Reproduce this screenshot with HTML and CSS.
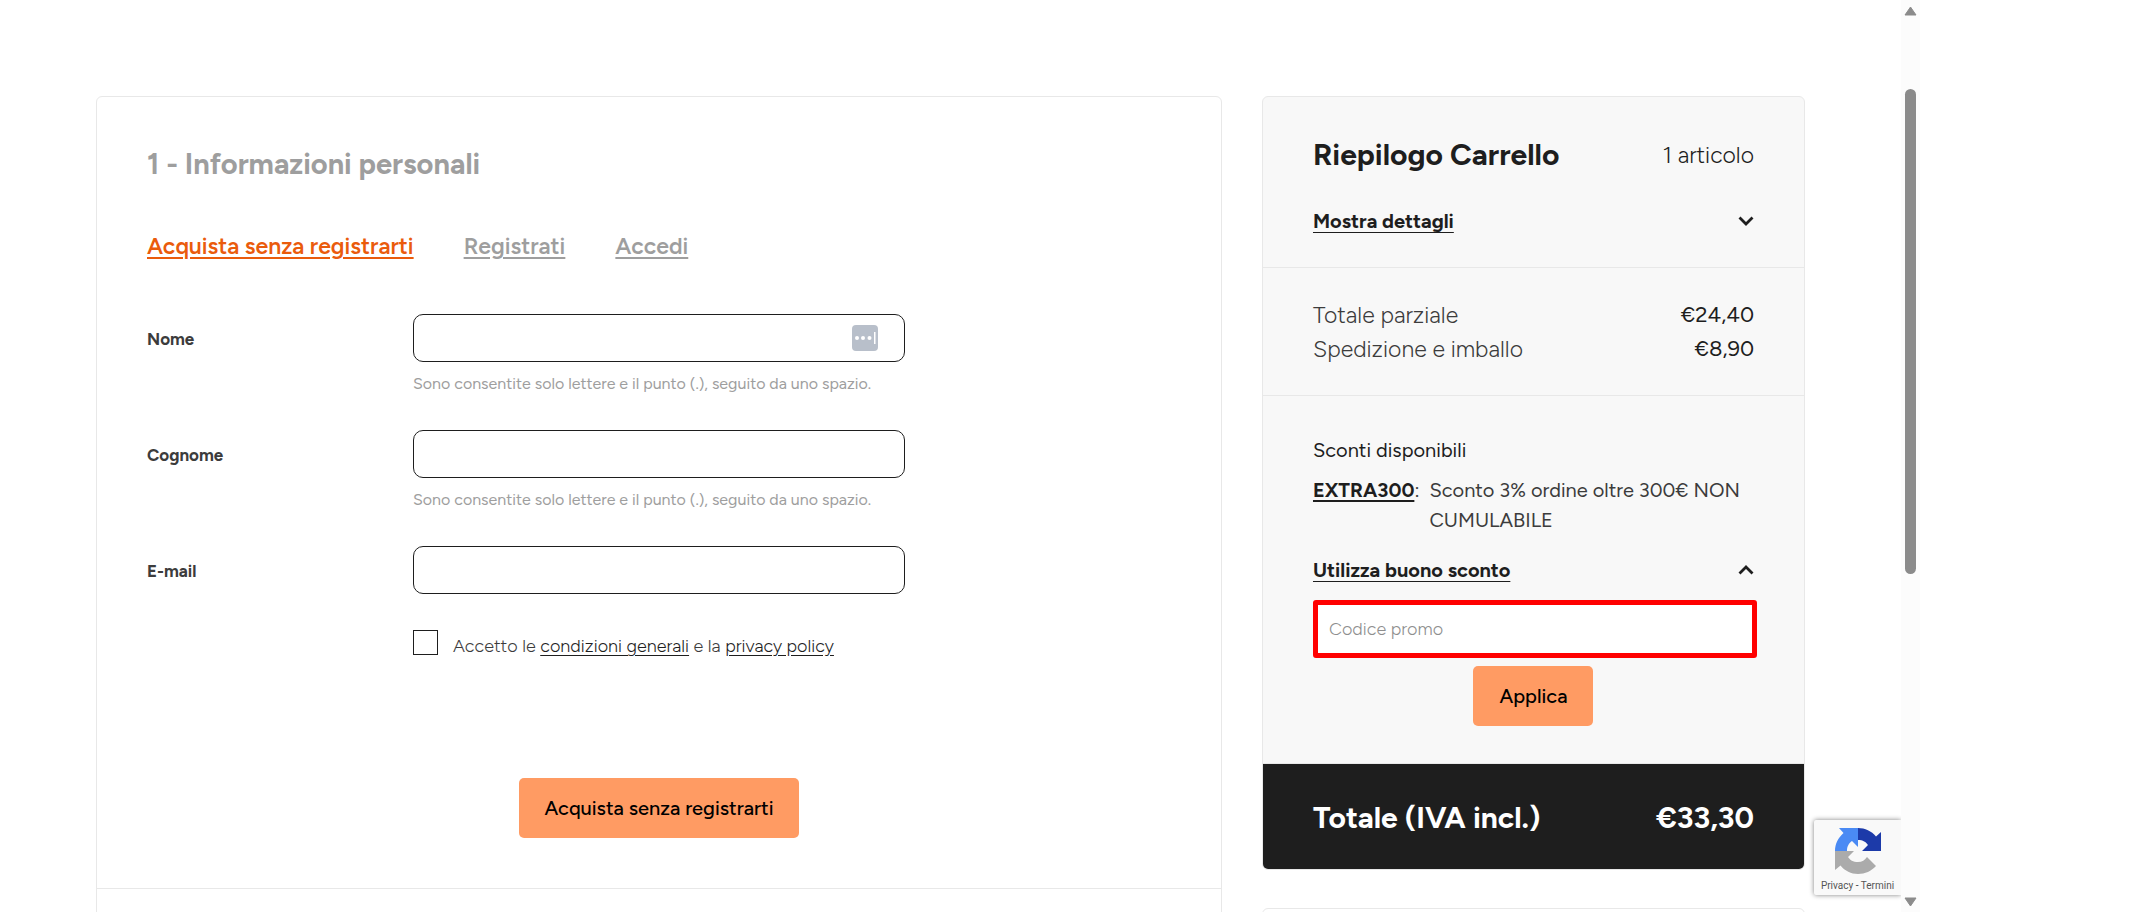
FILE: index.html
```html
<!DOCTYPE html>
<html lang="it">
<head>
    <meta charset="UTF-8">
    <title>Checkout</title>
    <link rel="stylesheet" href="styles.css">
</head>
<body>

    <div class="viewport">
        <main class="checkout">

            <!-- Personal information -->
            <section class="card">
                <div class="step">
                    <h1 class="step-title">1 - Informazioni personali</h1>
                    <nav class="tabs">
                        <a class="active" href="#guest">Acquista senza registrarti</a>
                        <a href="#register">Registrati</a>
                        <a href="#login">Accedi</a>
                    </nav>

                    <form id="guest">
                        <div class="form-row">
                            <label for="firstname">Nome</label>
                            <div class="field">
                                <div class="input-wrap">
                                    <input class="text-input" type="text" id="firstname">
                                    <svg class="autofill" width="26" height="26" viewBox="0 0 26 26">
                                        <rect width="26" height="26" rx="4" fill="#b8bfca"/>
                                        <circle cx="5" cy="13" r="2" fill="#fff"/>
                                        <circle cx="11" cy="13" r="2" fill="#fff"/>
                                        <circle cx="17.500" cy="13" r="2" fill="#fff"/>
                                        <rect x="22" y="7" width="1.500" height="12" fill="#fff"/>
                                    </svg>
                                </div>
                                <p class="hint">Sono consentite solo lettere e il punto (.), seguito da uno spazio.</p>
                            </div>
                        </div>
                        <div class="form-row">
                            <label for="lastname">Cognome</label>
                            <div class="field">
                                <input class="text-input" type="text" id="lastname">
                                <p class="hint">Sono consentite solo lettere e il punto (.), seguito da uno spazio.</p>
                            </div>
                        </div>
                        <div class="form-row">
                            <label for="email">E-mail</label>
                            <div class="field">
                                <input class="text-input" type="email" id="email">
                            </div>
                        </div>
                        <div class="form-row">
                            <div class="terms">
                                <input type="checkbox" id="terms">
                                <label for="terms">Accetto le <a href="#terms">condizioni generali</a> e la <a href="#privacy">privacy policy</a></label>
                            </div>
                        </div>
                        <button class="btn" type="submit">Acquista senza registrarti</button>
                    </form>
                </div>
                <div class="step"></div>
            </section>

            <!-- Cart summary -->
            <aside class="side">
                <div class="card summary">
                    <div class="block block-head">
                        <div class="line">
                            <h2>Riepilogo Carrello</h2>
                            <span class="count">1 articolo</span>
                        </div>
                        <div class="line toggle">
                            <a href="#details">Mostra dettagli</a>
                            <svg width="16" height="10" viewBox="0 0 16 10"><path d="M1.500 1.500 8 8 14.500 1.500" fill="none" stroke="#1e1e1e" stroke-width="2.800"/></svg>
                        </div>
                    </div>
                    <div class="block block-totals">
                        <div class="line"><span>Totale parziale</span><span class="price">€24,40</span></div>
                        <div class="line"><span>Spedizione e imballo</span><span class="price">€8,90</span></div>
                    </div>
                    <div class="block block-promo">
                        <p class="promo-title">Sconti disponibili</p>
                        <div class="promo">
                            <span><a href="#EXTRA300">EXTRA300</a>:</span>
                            <span>Sconto 3% ordine oltre 300€ NON CUMULABILE</span>
                        </div>
                        <div class="line toggle">
                            <a href="#voucher">Utilizza buono sconto</a>
                            <svg width="16" height="10" viewBox="0 0 16 10"><path d="M1.500 8.500 8 2 14.500 8.500" fill="none" stroke="#1e1e1e" stroke-width="2.800"/></svg>
                        </div>
                        <form id="voucher">
                            <input class="promo-input" type="text" placeholder="Codice promo" aria-label="Codice promo">
                            <button class="btn" type="submit">Applica</button>
                        </form>
                    </div>
                    <div class="total line">
                        <span>Totale (IVA incl.)</span>
                        <span>€33,30</span>
                    </div>
                </div>
                <div class="card extra"></div>
            </aside>
        </main>

        <!-- reCAPTCHA badge -->
        <div class="recaptcha">
            <svg width="48" height="48" viewBox="0 0 48 48">
                <path fill="#1c3aa9" d="M24 1C31 1 37.500 4 42 9.500L47 5V24H28L34 18C32 15 29 13 24 13Z"/>
                <path fill="#4a8af4" d="M24 1V20L18 14C15 16 13 19 13 24H1C1 17 4 11 9.500 6L5 1Z"/>
                <path fill="#ababab" d="M1 24H20L14 30C16 33 19 35 24 35C28 35 31 33 33 30L42 39C37.500 44 31 47 24 47C17 47 11 44 6.500 38.500L1 43Z"/>
            </svg>
            <div class="recaptcha-links"><a href="#privacy">Privacy</a> - <a href="#terms">Termini</a></div>
        </div>
    </div>

    <!-- Scrollbar -->
    <div class="scrollbar">
        <svg width="13" height="10" viewBox="0 0 13 10"><path d="M6.500 1 12 9H1Z" fill="#8b8b8b" stroke="#8b8b8b" stroke-linejoin="round"/></svg>
        <div class="track"><div class="thumb"></div></div>
        <svg width="13" height="10" viewBox="0 0 13 10"><path d="M6.500 9 12 1H1Z" fill="#8b8b8b" stroke="#8b8b8b" stroke-linejoin="round"/></svg>
    </div>

</body>
</html>
```
FILE: styles.css
```css
* {
    box-sizing: border-box;
}

body {
    font-family: Figtree, Lato, sans-serif;
    font-size: 18px;
    font-weight: 300;
    line-height: 28px;
    color: #3c3c3c;
    background-color: #fff;
    margin: 0;
    padding-right: 231px;
    height: 100vh;
    display: flex;
    overflow: hidden;
}

h1, h2, p {
    margin: 0;
}

a {
    color: #1e1e1e;
    text-underline-offset: 3px;
}

.viewport {
    flex: 1;
    position: relative;
    overflow: hidden;
}

.checkout {
    padding: 96px;
    display: grid;
    grid-template-columns: calc((100% + 40px) * 2 / 3 - 40px) 1fr;
    gap: 40px;
}

.card {
    border: 1px solid #e8e8e8;
    border-radius: 6px;
    overflow: hidden;
}

/* Checkout steps */
.step {
    padding: 49px 50px 50px;
}

.step + .step {
    border-top: 1px solid #e8e8e8;
    padding-bottom: 200px;
}

.step-title {
    font-size: 29px;
    line-height: 36px;
    color: #9e9e9e;
}

.tabs {
    display: flex;
    gap: 50px;
    margin: 48px 0 52px;
    font-size: 23px;
    line-height: 32px;
    font-weight: 600;
}

.tabs a {
    color: #9e9e9e;
    text-decoration-thickness: 2px;
}

.tabs .active {
    color: #ea5b0c;
}

.form-row {
    display: grid;
    grid-template-columns: calc((100% + 40px) / 4 - 40px) calc((100% + 40px) / 2 - 40px) 1fr;
    column-gap: 40px;
    margin-bottom: 34px;
}

.form-row > label {
    font-size: 17px;
    font-weight: 700;
    line-height: 50px;
}

.input-wrap {
    position: relative;
}

.autofill {
    position: absolute;
    right: 27px;
    top: 11px;
}

.text-input {
    display: block;
    width: 100%;
    height: 48px;
    padding: 0 16px;
    border: 1px solid #1e1e1e;
    border-radius: 10px;
    background: #fff;
    font: inherit;
}

.hint {
    margin-top: 10px;
    font-size: 16px;
    font-weight: 400;
    line-height: 24px;
    color: #9e9e9e;
}

.terms {
    grid-column: 2;
    display: flex;
    gap: 15px;
    line-height: 32px;
}

.terms input {
    appearance: none;
    width: 25px;
    height: 25px;
    margin: 0;
    border: 1px solid #1e1e1e;
    background: #fff;
}

.btn {
    display: block;
    height: 60px;
    margin: 0 auto;
    padding: 0 26px;
    border: none;
    border-radius: 5px;
    background-color: #ff9b63;
    color: #000;
    font-family: inherit;
    font-size: 20px;
    font-weight: 500;
}

#guest .btn {
    margin-top: 116px;
}

/* Cart summary */
.summary {
    background-color: #f8f8f8;
    margin-bottom: 38px;
}

.block {
    padding: 0 50px;
    border-bottom: 1px solid #e8e8e8;
}

.line {
    display: flex;
    justify-content: space-between;
    align-items: center;
}

.block-head {
    padding-top: 38px;
    padding-bottom: 31px;
}

.block-head h2 {
    font-size: 30px;
    line-height: 40px;
    color: #1e1e1e;
}

.count {
    font-size: 23px;
    color: #1e1e1e;
}

.toggle {
    font-size: 20px;
    line-height: 30px;
    font-weight: 700;
}

.toggle a {
    text-decoration-thickness: 1px;
    text-underline-offset: 4px;
}

.block-head .toggle {
    margin-top: 31px;
}

.block-totals {
    padding-top: 30px;
    padding-bottom: 29px;
    font-size: 23px;
    line-height: 34px;
}

.price {
    color: #1e1e1e;
    font-size: 22px;
    font-weight: 400;
}

.block-promo {
    padding-top: 39px;
    padding-bottom: 37px;
    font-size: 20px;
    font-weight: 400;
    line-height: 30px;
}

.promo-title {
    color: #1e1e1e;
}

.promo {
    display: flex;
    gap: 10px;
    margin: 10px 0 20px;
}

.promo a {
    font-weight: 700;
    text-decoration-thickness: 2px;
}

.promo-input {
    display: block;
    width: calc(100% + 3px);
    height: 58px;
    margin: 15px 0 8px;
    padding: 0 11px;
    border: 5px solid #f00;
    border-radius: 3px;
    background: #fff;
    font: inherit;
    font-size: 18px;
    font-weight: 300;
}

.promo-input::placeholder {
    color: #8e8e8e;
}

.total {
    padding: 34px 50px 31px;
    background-color: #1e1e1e;
    color: #fff;
    font-size: 30px;
    line-height: 40px;
    font-weight: 700;
}

.extra {
    height: 200px;
}

/* reCAPTCHA badge, pinned to the right edge */
.recaptcha {
    position: absolute;
    right: 0;
    bottom: 17px;
    width: 87px;
    height: 75px;
    padding-top: 7px;
    background-color: #f9f9f9;
    border-radius: 2px 0 0 2px;
    box-shadow: 0 0 5px gray;
    text-align: center;
    font-family: Roboto, sans-serif;
    font-size: 10px;
    font-weight: 400;
    line-height: 12px;
}

.recaptcha svg {
    display: block;
    margin: 0 auto 5px;
}

.recaptcha a {
    color: #555;
    text-decoration: none;
}

/* Scrollbar */
.scrollbar {
    width: 19px;
    padding: 6px 0 5px;
    background-color: #fcfcfc;
    display: flex;
    flex-direction: column;
    align-items: center;
}

.track {
    flex: 1;
    padding-top: 73px;
}

.thumb {
    width: 11px;
    height: 60%;
    border-radius: 6px;
    background-color: #8b8b8b;
}
```
